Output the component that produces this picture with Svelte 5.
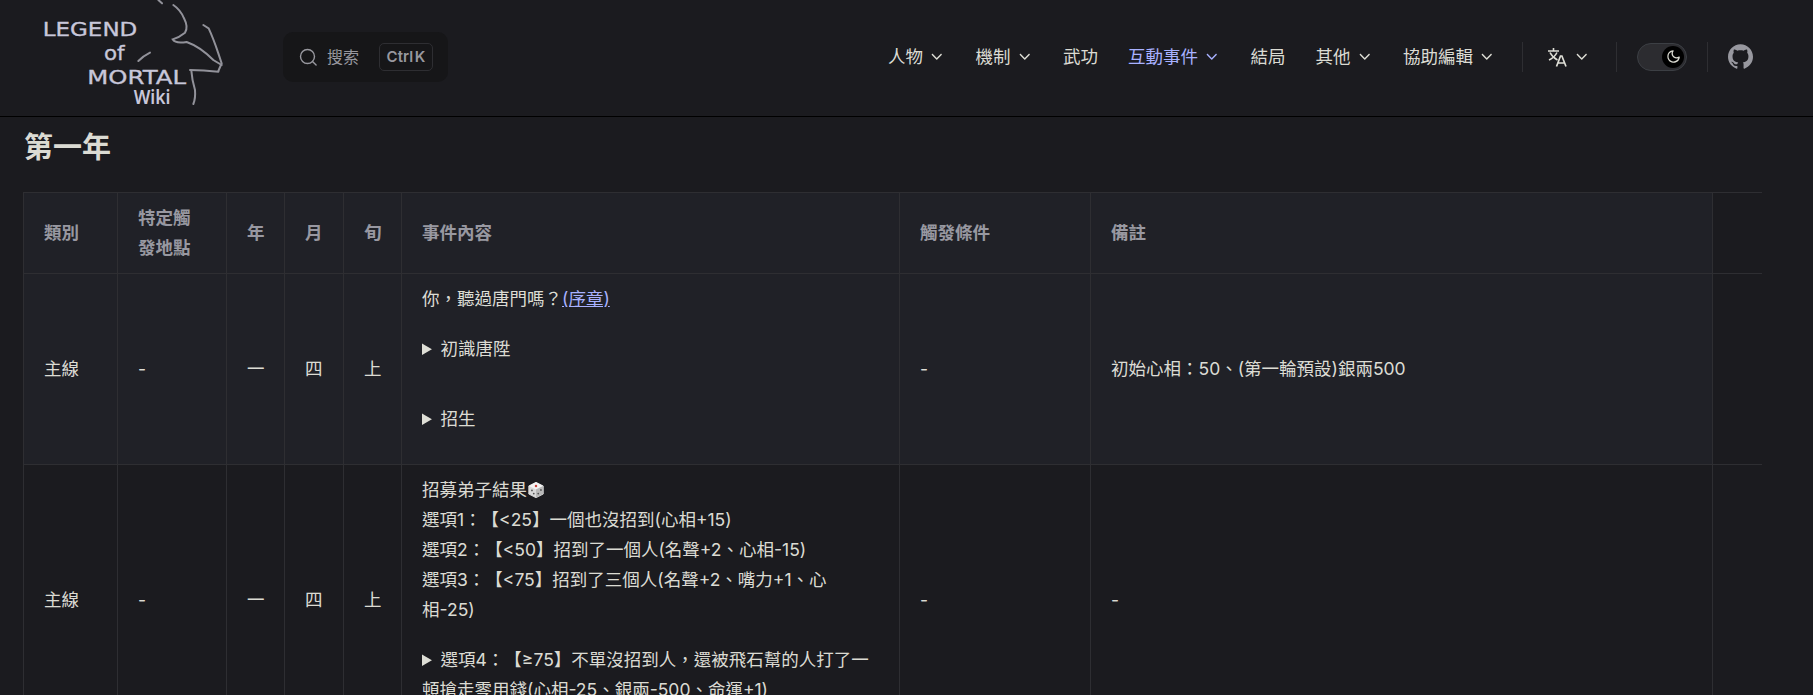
<script>
  const chevron = "M12,16c-0.3,0-0.5-0.1-0.7-0.3l-6-6c-0.4-0.4-0.4-1,0-1.4s1-0.4,1.4,0l5.3,5.3l5.3-5.3c0.4-0.4,1-0.4,1.4,0s0.4,1,0,1.4l-6,6C12.5,15.9,12.3,16,12,16z";
  const navItems = [
    { label: "人物", menu: true },
    { label: "機制", menu: true },
    { label: "武功" },
    { label: "互動事件", menu: true, active: true },
    { label: "結局" },
    { label: "其他", menu: true },
    { label: "協助編輯", menu: true }
  ];
  const headers = ["類別", "特定觸發地點", "年", "月", "旬", "事件內容", "觸發條件", "備註", ""];
</script>

<header class="navbar">
  <svg class="logo" viewBox="0 0 600 345" width="200" height="115">
    <text class="logo-text" x="38" y="108" textLength="284" lengthAdjust="spacingAndGlyphs">LEGEND</text>
    <text class="logo-text" x="222" y="180" textLength="62" lengthAdjust="spacingAndGlyphs">of</text>
    <text class="logo-text" x="172" y="252" textLength="296" lengthAdjust="spacingAndGlyphs">MORTAL</text>
    <text class="logo-wiki" x="311" y="312" textLength="110" lengthAdjust="spacingAndGlyphs">Wiki</text>
    <g class="logo-strokes">
      <path d="M385 0 L396 10" />
      <path d="M430 15 Q452 30 462 55 Q476 82 465 98 Q448 112 428 118 Q436 132 470 126 Q510 140 550 180 L575 195" />
      <path d="M520 75 L536 85 Q550 115 565 160 L575 190 L565 213" />
      <path d="M480 210 Q520 210 565 215" />
      <path d="M484 212 Q486 240 495 270 Q497 295 490 312" />
      <path d="M325 183 Q340 168 360 158" />
    </g>
  </svg>

  <div class="search">
    <svg class="search-icon" viewBox="0 0 20 20" width="20" height="20" fill="none" stroke="currentColor" stroke-width="1.4">
      <circle cx="9.5" cy="9.5" r="7" /><path d="M14.5 14.5l3.6 3.6" stroke-linecap="round" />
    </svg>
    <span class="search-label">搜索</span>
    <kbd class="search-key">Ctrl K</kbd>
  </div>

  <nav class="menu">
    {#each navItems as item}
      <span class="nav-item" class:active={item.active}>
        {item.label}
        {#if item.menu}
          <svg class="chevron" viewBox="0 0 24 24" width="17.5" height="17.5"><path d={chevron} /></svg>
        {/if}
      </span>
    {/each}
  </nav>

  <span class="divider"></span>
  <span class="translate">
    <svg viewBox="0 0 24 24" width="24" height="24" fill="none" stroke="currentColor" stroke-width="1.6">
      <path d="M3 6h11M8.5 3v3M5 7.5q2.5 5 7.5 7.5M12 7.5q-2.5 5-8 7.5" />
      <path d="M11.5 21.5L15.5 11h1.4L21 21.5M13 18h7" stroke-width="1.7" />
    </svg>
    <svg class="chevron" viewBox="0 0 24 24" width="17.5" height="17.5"><path d={chevron} /></svg>
  </span>
  <span class="divider"></span>
  <span class="switch">
    <span class="thumb">
      <svg viewBox="0 0 24 24" width="15" height="15" fill="currentColor">
        <path d="M12.1,22c-0.3,0-0.6,0-0.9,0c-5.5-0.5-9.5-5.4-9-10.9c0.4-4.8,4.2-8.6,9-9c0.4,0,0.8,0.2,1,0.5c0.2,0.3,0.2,0.8-0.1,1.1c-2,2.7-1.4,6.4,1.3,8.4c2.1,1.6,5,1.6,7.1,0c0.3-0.2,0.7-0.3,1.1-0.1c0.3,0.2,0.5,0.6,0.5,1c-0.2,2.7-1.5,5.1-3.6,6.8C16.6,21.2,14.4,22,12.1,22zM9.3,4.4c-2.9,1-5,3.6-5.2,6.8c-0.4,4.4,2.8,8.3,7.2,8.7c2.1,0.2,4.2-0.4,5.8-1.8c1.1-0.9,1.9-2.1,2.4-3.4c-2.5,0.9-5.3,0.5-7.5-1.1C9.2,11.4,8.1,7.7,9.3,4.4z" />
      </svg>
    </span>
  </span>
  <span class="divider"></span>
  <svg class="github" viewBox="0 0 24 24" width="25" height="25" fill="currentColor">
    <path d="M12 .297c-6.63 0-12 5.373-12 12 0 5.303 3.438 9.8 8.205 11.385.6.113.82-.258.82-.577 0-.285-.01-1.04-.015-2.04-3.338.724-4.042-1.61-4.042-1.61C4.422 18.07 3.633 17.7 3.633 17.7c-1.087-.744.084-.729.084-.729 1.205.084 1.838 1.236 1.838 1.236 1.07 1.835 2.809 1.305 3.495.998.108-.776.417-1.305.76-1.605-2.665-.3-5.466-1.332-5.466-5.93 0-1.31.465-2.38 1.235-3.22-.135-.303-.54-1.523.105-3.176 0 0 1.005-.322 3.3 1.23.96-.267 1.98-.399 3-.405 1.02.006 2.04.138 3 .405 2.28-1.552 3.285-1.23 3.285-1.23.645 1.653.24 2.873.12 3.176.765.84 1.23 1.91 1.23 3.22 0 4.61-2.805 5.625-5.475 5.92.42.36.81 1.096.81 2.22 0 1.606-.015 2.896-.015 3.286 0 .315.21.69.825.57C20.565 22.092 24 17.592 24 12.297c0-6.627-5.373-12-12-12" />
  </svg>
</header>

<main class="content">
  <h2>第一年</h2>
  <div class="table-wrap">
    <table>
      <colgroup>
        <col class="col-a" /><col class="col-b" /><col class="col-c" />
        <col class="col-d" /><col class="col-c" /><col class="col-e" />
        <col class="col-f" /><col class="col-g" /><col class="col-h" />
      </colgroup>
      <thead>
        <tr>
          {#each headers as h}<th>{h}</th>{/each}
        </tr>
      </thead>
      <tbody>
        <tr>
          <td>主線</td><td>-</td><td>一</td><td>四</td><td>上</td>
          <td>
            <p>你，聽過唐門嗎？<a href="#prologue">(序章)</a></p>
            <details class="spaced"><summary>初識唐陞</summary></details>
            <details><summary>招生</summary></details>
          </td>
          <td>-</td>
          <td>初始心相：50、(第一輪預設)銀兩500</td>
          <td></td>
        </tr>
        <tr>
          <td>主線</td><td>-</td><td>一</td><td>四</td><td>上</td>
          <td>
            <p>
              招募弟子結果<svg class="dice" viewBox="0 0 20 20" width="18" height="18">
                <path d="M10 1.5L18 5.5V14.5L10 18.5L2 14.5V5.5Z" fill="#d9d9d9" stroke="#d9d9d9" stroke-linejoin="round" />
                <path d="M10 1.5L18 5.5L10 9.5L2 5.5Z" fill="#f4f4f4" />
                <path d="M10 9.5L18 5.5V14.5L10 18.5Z" fill="#b9b9b9" />
                <circle cx="10" cy="5.5" r="1.4" fill="#c8453f" />
                <circle cx="5.5" cy="10.5" r="1" fill="#555" /><circle cx="7.5" cy="14" r="1" fill="#555" />
                <circle cx="12.5" cy="14" r="1" fill="#555" /><circle cx="15.5" cy="10" r="1" fill="#555" />
              </svg><br />
              選項1：【&lt;25】一個也沒招到(心相+15)<br />
              選項2：【&lt;50】招到了一個人(名聲+2、心相-15)<br />
              選項3：【&lt;75】招到了三個人(名聲+2、嘴力+1、心<br />
              相-25)
            </p>
            <details><summary>選項4：【≥75】不單沒招到人，還被飛石幫的人打了一頓搶走零用錢(心相-25、銀兩-500、命運+1)</summary></details>
          </td>
          <td>-</td>
          <td>-</td>
          <td></td>
        </tr>
      </tbody>
    </table>
  </div>
</main>

<style>
  :global(body) {
    background: #1b1b1f;
    color: rgba(255, 255, 245, 0.86);
    font-family: Inter, "Noto Sans CJK TC", sans-serif;
    font-size: 17.5px;
    line-height: 30px;
    text-spacing-trim: space-all;
    height: 695px;
    overflow: hidden;
  }
  .navbar {
    display: flex;
    align-items: center;
    height: 117px;
    box-sizing: border-box;
    padding: 0 60px 3px 30px;
    border-bottom: 1px solid #000;
  }
  .logo {
    flex-shrink: 0;
    align-self: flex-start;
    margin-right: 53px;
  }
  .logo-text {
    font-family: "DejaVu Sans", sans-serif;
    font-size: 58px;
    fill: #c8c7da;
    stroke: #c8c7da;
    stroke-width: 1;
  }
  .logo-wiki {
    font-family: "Noto Sans", sans-serif;
    font-weight: 600;
    font-size: 58px;
    fill: #c8c7da;
  }
  .logo-strokes path {
    fill: none;
    stroke: #92929a;
    stroke-width: 6;
    stroke-linecap: round;
    filter: blur(0.5px);
  }
  .search {
    display: flex;
    align-items: center;
    width: 165px;
    height: 50px;
    box-sizing: border-box;
    padding: 0 15px 0 15px;
    background: #161618;
    border-radius: 10px;
    color: #98989f;
  }
  .search-icon {
    flex-shrink: 0;
    margin-right: 9px;
  }
  .search-label {
    font-size: 16px;
  }
  .search-key {
    display: flex;
    align-items: center;
    justify-content: center;
    margin-left: auto;
    width: 54px;
    height: 28px;
    box-sizing: border-box;
    border: 1px solid #2e2e32;
    border-radius: 5px;
    font-family: Inter, sans-serif;
    font-size: 15px;
    font-weight: 600;
    word-spacing: -2px;
  }
  .menu {
    display: flex;
    margin-left: auto;
    margin-right: 1px;
  }
  .nav-item {
    display: flex;
    align-items: center;
    padding: 0 15px;
  }
  .nav-item.active {
    color: #a8b1ff;
  }
  .chevron {
    margin-left: 5px;
    fill: currentColor;
  }
  .divider {
    width: 1px;
    height: 30px;
    background: #2e2e32;
    margin: 0 20px 0 10px;
  }
  .translate {
    display: flex;
    align-items: center;
    padding: 0 11px 0 2px;
    margin-right: 5px;
  }
  .translate .chevron {
    margin-left: 4px;
  }
  .switch {
    display: flex;
    justify-content: flex-end;
    align-items: center;
    width: 50px;
    height: 28px;
    box-sizing: border-box;
    padding-right: 2px;
    border: 1px solid #3c3f44;
    border-radius: 14px;
    background: #2c2c30;
    margin-right: 10px;
  }
  .thumb {
    display: flex;
    align-items: center;
    justify-content: center;
    width: 22px;
    height: 22px;
    border-radius: 50%;
    background: #000;
  }
  .github {
    flex-shrink: 0;
    color: #98989f;
  }
  .content {
    padding-left: 23px;
  }
  h2 {
    margin: 0;
    padding: 11px 0 0 1px;
    height: 65px;
    box-sizing: border-box;
    font-size: 29px;
    line-height: 40px;
    font-weight: 600;
  }
  .table-wrap {
    width: 1739px;
    overflow: hidden;
    margin-top: 10px;
  }
  table {
    border-collapse: collapse;
    table-layout: fixed;
    width: 1789px;
  }
  .col-a { width: 94px; }
  .col-b { width: 109px; }
  .col-c { width: 58px; }
  .col-d { width: 59px; }
  .col-e { width: 498px; }
  .col-f { width: 191px; }
  .col-g { width: 622px; }
  .col-h { width: 100px; }
  th,
  td {
    padding: 10px 20px;
    border: 1px solid #2e2e32;
    text-align: left;
    vertical-align: middle;
  }
  th {
    background: #202127;
    color: rgba(235, 235, 245, 0.6);
    font-weight: 600;
  }
  tbody tr:nth-child(odd) td {
    background: #202127;
  }
  th:last-child,
  tbody tr td:last-child {
    background: transparent;
  }
  p {
    margin: 0 0 20px;
  }
  details {
    margin: 20px 0;
  }
  p + details {
    margin-top: 0;
  }
  details.spaced {
    margin-bottom: 40px;
  }
  details:last-child {
    margin-bottom: 20px;
  }
  a {
    color: #a8b1ff;
  }
  .dice {
    vertical-align: -3px;
  }
</style>
